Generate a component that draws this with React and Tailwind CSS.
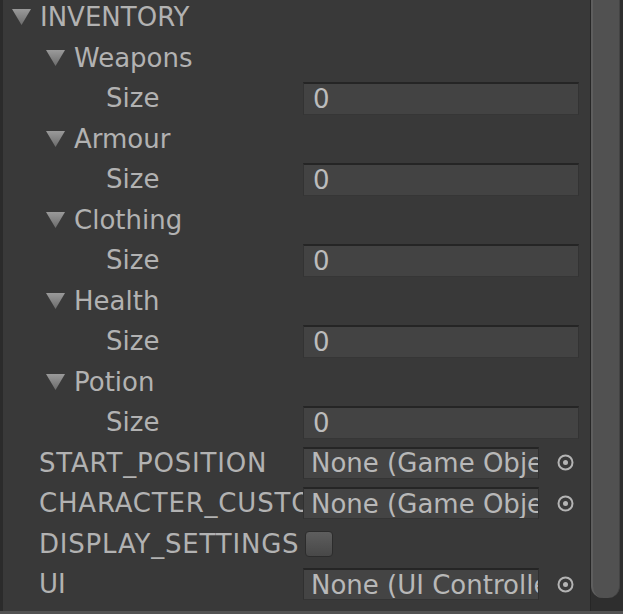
const FONT = { fontFamily: '"DejaVu Sans", "Liberation Sans", sans-serif' };

const GROUPS = ['Weapons', 'Armour', 'Clothing', 'Health', 'Potion'];

function Arrow() {
  return (
    <svg width="19" height="16" viewBox="0 0 19 16" className="shrink-0">
      <defs>
        <linearGradient id="arr" x1="0" y1="0" x2="0" y2="1">
          <stop offset="0" stopColor="#9a9a9a" />
          <stop offset="1" stopColor="#6c6c6c" />
        </linearGradient>
      </defs>
      <polygon points="0,0 19,0 9.5,16" fill="url(#arr)" />
    </svg>
  );
}

function Picker() {
  return (
    <svg width="17" height="17" viewBox="0 0 17 17" className="ml-[18px] shrink-0">
      <circle cx="8.5" cy="8.5" r="7" fill="none" stroke="#b4b4b4" strokeWidth="2" />
      <circle cx="8.5" cy="8.5" r="2.5" fill="#b4b4b4" />
    </svg>
  );
}

function Row({ children }) {
  return <div className="h-[40.5px] flex items-center shrink-0">{children}</div>;
}

function Label({ pad, arrow, wide, children }) {
  return (
    <div
      className={`w-[300px] shrink-0 flex items-center gap-[9px] overflow-hidden whitespace-nowrap text-[#b2b2b2] text-[26px] leading-[36px] ${
        wide ? 'tracking-[0.8px]' : ''
      }`}
      style={{ paddingLeft: pad }}
    >
      {arrow && <Arrow />}
      <span>{children}</span>
    </div>
  );
}

function NumField({ value }) {
  return (
    <div className="w-[276px] h-[33px] shrink-0 bg-[#434343] border-t-2 border-[#252525] border-x border-b border-x-[#333333] border-b-[#363636] flex items-center pl-[9px] text-[#bcbcbc] text-[26px] leading-[30px]">
      {value}
    </div>
  );
}

function ObjField({ value }) {
  return (
    <>
      <div className="w-[236px] h-[32px] shrink-0 bg-[#444444] border-t-2 border-[#252525] border-x border-b border-x-[#303030] border-b-[#343434] flex items-center pl-[7px] overflow-hidden whitespace-nowrap text-[#b8b8b8] text-[26px] leading-[30px]">
        {value}
      </div>
      <Picker />
    </>
  );
}

export default function App() {
  return (
    <div className="w-[623px] h-[614px] bg-[#393939] flex flex-col overflow-hidden" style={FONT}>
      <div className="flex-1 flex min-h-0">
        <div className="w-[3px] bg-[#2b2b2b]" />
        <div className="flex-1 flex flex-col -mt-[3px]">
          <Row>
            <Label pad={9} arrow>INVENTORY</Label>
          </Row>
          {GROUPS.map((g) => (
            <div key={g} className="flex flex-col">
              <Row>
                <Label pad={43} arrow>{g}</Label>
              </Row>
              <Row>
                <Label pad={103}>Size</Label>
                <NumField value="0" />
              </Row>
            </div>
          ))}
          <Row>
            <Label pad={36} wide>START_POSITION</Label>
            <ObjField value="None (Game Object)" />
          </Row>
          <Row>
            <Label pad={36} wide>CHARACTER_CUSTOMIZATION</Label>
            <ObjField value="None (Game Object)" />
          </Row>
          <Row>
            <Label pad={36} wide>DISPLAY_SETTINGS</Label>
            <div className="ml-[2px] w-[28px] h-[26px] rounded-[4px] bg-gradient-to-b from-[#5e5e5e] to-[#484848] border border-[#2c2c2c]" />
          </Row>
          <Row>
            <Label pad={36}>UI</Label>
            <ObjField value="None (UI Controller)" />
          </Row>
        </div>
        {/* scrollbar */}
        <div className="w-[33px] flex bg-[#2e2e2e] border-l border-[#262626]">
          <div className="w-[29px] h-[598px] bg-[#515151] border-l-2 border-[#5e5e5e] border-r border-r-[#444444] rounded-b-[12px]" />
        </div>
      </div>
      <div className="h-[3px] bg-[#525252]" />
    </div>
  );
}
